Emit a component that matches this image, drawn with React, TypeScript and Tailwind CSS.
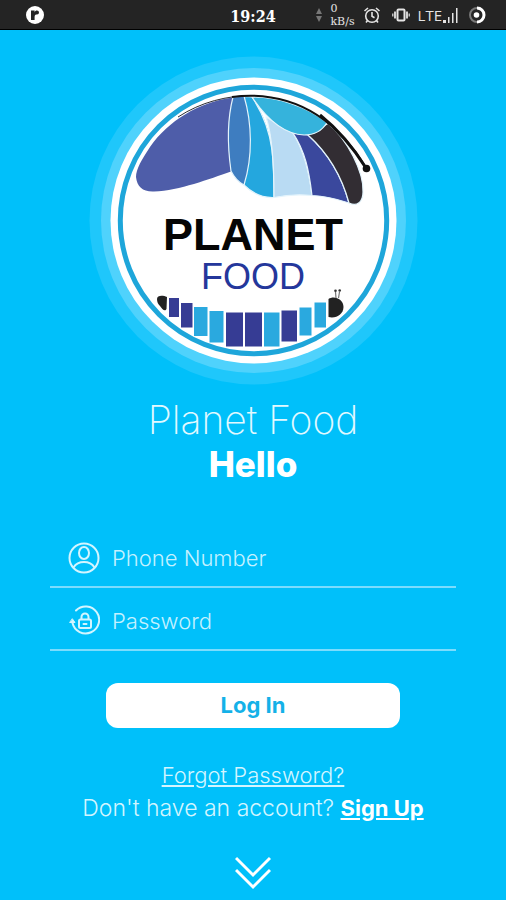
import type { ReactNode } from "react";

type Segment = {
  x: number;
  y: number;
  width: number;
  height: number;
  fill: string;
};

const NAVY = "#363c94";
const SKY = "#2aa9df";

const bodySegments: readonly Segment[] = [
  { x: 169, y: 298, width: 10, height: 19, fill: NAVY },
  { x: 181, y: 303, width: 11.5, height: 24.5, fill: NAVY },
  { x: 194, y: 307, width: 13.5, height: 29, fill: SKY },
  { x: 209.5, y: 311, width: 14, height: 31.5, fill: SKY },
  { x: 226, y: 312.5, width: 17, height: 34, fill: NAVY },
  { x: 245, y: 312.5, width: 17, height: 34, fill: NAVY },
  { x: 264, y: 312.5, width: 15.5, height: 34, fill: SKY },
  { x: 281.5, y: 310.5, width: 15.5, height: 31, fill: NAVY },
  { x: 299.5, y: 307.5, width: 12, height: 28, fill: SKY },
  { x: 314.5, y: 302.5, width: 11.5, height: 25, fill: SKY }
];

function Logo() {
  return (
    <svg viewBox="88 55 330 330" className="size-[330px]" role="img" aria-label="Planet Food logo">
      <circle cx="253.5" cy="220.5" r="164" fill="#1fc7fb" />
      <circle cx="253.5" cy="220.5" r="152.5" fill="#4fd2fc" />
      <circle cx="253.5" cy="220.5" r="143" fill="#fff" />
      <circle cx="253.5" cy="220.5" r="133.2" fill="none" stroke="#1ea6da" strokeWidth="5" />

      {/* wing */}
      <path
        d="M233 97.5C199 102 168 121 150 147C142 159 136 169 136 177C137 187 143 192 154 191.5C180 190.5 209 179 231 171.5C228 145 228 120 233 97.5Z"
        fill="#4e5da9"
      />
      <g stroke="#e4f4fc" strokeWidth="1.2" strokeLinejoin="round">
        <path d="M244 96.5L252 97C262 112 269 128 272 150C274 168 274 182 274 197.5C262 198 252 193 244 185Z" fill="#24a7de" />
        <path d="M233 97C226 124 228 150 231 171C234 177 238 182 244 185C253 156 252 123 244 96Z" fill="#3e7dc0" />
        <path d="M266 117C273 138 274 168 274 197.5C286 195 299 194 312 195.5C309 170 304 151 293 133Z" fill="#b9dbf3" />
        <path d="M293 133C305 151 309 170 312 195.5C326 196 337 199 349 203C342 177 329 154 308 135Z" fill="#3a489d" />
        <path d="M308 135C329 154 342 177 349 203C357 207 363 202 363 192C364 172 347 139 328 123.5Z" fill="#322d33" />
        <path d="M252 97C277 97 307 106 327 122.5C322 131 315 135 304 135C284 134 266 118 252 97Z" fill="#35b3dc" />
      </g>
      <path d="M178 117C201 102 227 95.5 253 95.5" fill="none" stroke="#15141a" strokeWidth="0.9" />
      <path d="M232 97Q243 95.5 253 95.7C302 97 339 123 366 168" fill="none" stroke="#111" strokeWidth="2" />
      <path d="M320 115Q346 136 366 168" fill="none" stroke="#111" strokeWidth="3" />
      <circle cx="366.5" cy="168.5" r="3.8" fill="#111" />

      <text
        x="253"
        y="250"
        textAnchor="middle"
        fill="#050505"
        className="font-['Liberation_Sans',sans-serif] text-[45px] font-bold"
      >
        PLANET
      </text>
      <text
        x="253"
        y="289"
        textAnchor="middle"
        fill="#24379b"
        className="font-['Liberation_Sans',sans-serif] text-[36px]"
      >
        FOOD
      </text>

      {/* caterpillar */}
      <path d="M157 299C157 295 163 295 167 297L166.5 309C165 312 162 309 160 306C158 304 157 302 157 299Z" fill="#222" />
      {bodySegments.map((segment) => (
        <rect key={segment.x} {...segment} />
      ))}
      <path d="M328.5 299C334 295 343.5 299 343.5 307C343.5 314 336 319 328.5 317Z" fill="#222" />
      <path d="M336 298L335.5 292M338.5 298L339.5 292" fill="none" stroke="#777" strokeWidth="1.2" />
      <circle cx="335.5" cy="290.8" r="1.3" fill="#333" />
      <circle cx="339.7" cy="290.5" r="1.3" fill="#333" />
    </svg>
  );
}

function StatusBar() {
  return (
    <header className="grid h-[30px] grid-cols-[1fr_auto_1fr] items-center border-b border-black bg-[#242424] text-[#e4e4e4]">
      <svg viewBox="0 0 18 18" className="ml-[26px] size-[18px]" aria-hidden="true">
        <circle cx="9" cy="9" r="9" fill="#fff" />
        <path d="M5 4.5h3.6V6.500C9 5 9.800 4.500 11 4.500a2 2 0 0 1 0 4C9.500 8.500 8.600 9 8.600 11v3H5z" fill="#242424" />
      </svg>
      <time className="pt-1 font-['DejaVu_Serif_Condensed','DejaVu_Serif',serif] text-base leading-4 font-bold text-white">
        19:24
      </time>
      <div className="flex items-center justify-end pr-5">
        <svg viewBox="0 0 6 14" className="mr-2 h-[14px] w-[6px]" fill="#777" aria-hidden="true">
          <path d="M3 0l3 6H0zM3 14l3-6H0z" />
        </svg>
        <div className="mr-2 font-['DejaVu_Serif',serif] text-[11px] leading-[13px]">
          <p>0</p>
          <p>kB/s</p>
        </div>
        <svg viewBox="0 0 18 18" className="mr-[11px] size-[18px]" fill="none" stroke="currentColor" strokeWidth="1.6" aria-hidden="true">
          <circle cx="9" cy="10" r="6.3" />
          <path d="M9 6v4.200l2.500 1.500M1.500 5l3.500-3M16.500 5L13 2M4.500 14.500L3 16.500M13.500 14.500l1.500 2" />
        </svg>
        <svg viewBox="0 0 18 14" className="mr-2 h-[14px] w-[18px]" fill="none" stroke="currentColor" aria-hidden="true">
          <rect x="5.5" y="1.5" width="7" height="11" rx="1" strokeWidth="2" />
          <path d="M3 3.500v7M15 3.500v7" strokeWidth="1.8" />
          <path d="M.8 5.500v3M17.200 5.500v3" strokeWidth="1.2" />
        </svg>
        <span className="font-['Open_Sans',sans-serif] text-[15px] leading-4">LTE</span>
        <svg viewBox="0 0 16 16" className="ml-px mr-[9px] size-4" fill="currentColor" aria-hidden="true">
          <path d="M0 13h3v3H0zM5 10h1.500v6H5zM9 6h1.500v10H9zM13 1h1.500v15H13z" />
        </svg>
        <svg viewBox="0 0 18 18" className="size-[18px]" fill="none" aria-hidden="true">
          <circle cx="9" cy="9" r="7" stroke="#777" strokeWidth="2" />
          <path d="M9 2a7 7 0 0 1 0 14" stroke="#fff" strokeWidth="3" />
          <circle cx="8.5" cy="9" r="2.8" fill="#fff" />
        </svg>
      </div>
    </header>
  );
}

type FieldProps = {
  id: string;
  label: string;
  type: string;
  icon: ReactNode;
};

function Field({ id, label, type, icon }: FieldProps) {
  return (
    <div className="flex h-[63px] items-center gap-3 border-b-2 border-[#7bdcfd] pl-[18px] pt-1">
      <label htmlFor={id} aria-label={label} className="shrink-0 text-[#d3f5ff]">
        {icon}
      </label>
      <input
        id={id}
        type={type}
        placeholder={label}
        aria-label={label}
        className="h-10 min-w-0 flex-1 bg-transparent text-[22px] font-light text-white outline-none placeholder:text-[#c4f1ff]"
      />
    </div>
  );
}

function UserIcon() {
  return (
    <svg viewBox="0 0 32 32" className="size-8" fill="none" stroke="currentColor" strokeWidth="2" aria-hidden="true">
      <circle cx="16" cy="16" r="14.5" />
      <ellipse cx="16" cy="11" rx="5" ry="6" />
      <path d="M5.500 25.500C8 21.500 11.500 20 16 20s8 1.500 10.500 5.500" />
    </svg>
  );
}

function LockIcon() {
  return (
    <svg viewBox="0 0 32 32" className="size-8" fill="none" stroke="currentColor" strokeWidth="2" strokeLinecap="round" aria-hidden="true">
      <path d="M8 5.500A13.500 13.500 0 1 1 4.500 18" />
      <path d="M4.500 14l2.500 3.500H2z" fill="currentColor" strokeWidth="1" strokeLinejoin="round" />
      <rect x="11" y="14.5" width="12" height="8.500" rx="1.5" />
      <path d="M13.500 14V12a3.500 3.500 0 0 1 7 0v2M15.500 19h3" />
    </svg>
  );
}

export default function App() {
  return (
    <div className="min-h-screen bg-[#00c0fa] font-['Inter',sans-serif] text-white">
      <StatusBar />
      <main className="flex flex-col items-center px-[50px] pt-[25px]">
        <Logo />
        <h1 className="mt-3 text-center text-[39px] leading-[46px] font-extralight text-[#e2f9ff]">
          Planet Food
          <strong className="block text-[35px] leading-[42px] font-extrabold text-white">Hello</strong>
        </h1>

        <form className="mt-10 w-full" onSubmit={(event) => event.preventDefault()}>
          <Field id="phone" label="Phone Number" type="tel" icon={<UserIcon />} />
          <Field id="password" label="Password" type="password" icon={<LockIcon />} />
          <div className="mt-8 px-14">
            <button type="submit" className="h-[45px] w-full rounded-xl bg-white text-[22px] font-bold text-[#14b1e8]">
              Log In
            </button>
          </div>
        </form>

        <div className="mt-[31px] text-center text-[22px] leading-[33px] font-light text-[#d3f5ff]">
          <a href="#forgot" className="underline">
            Forgot Password?
          </a>
          <p className="text-[23px]">
            Don't have an account?{" "}
            <a href="#signup" className="text-[22px] font-bold text-white underline">
              Sign Up
            </a>
          </p>
        </div>

        <button type="button" aria-label="Show more" className="mt-[31px]">
          <svg viewBox="0 0 36 34" className="h-[34px] w-9" fill="none" stroke="#fff" strokeWidth="3" aria-hidden="true">
            <path d="M1 2l17 17L35 2M1 14l17 17L35 14" />
          </svg>
        </button>
      </main>
    </div>
  );
}
